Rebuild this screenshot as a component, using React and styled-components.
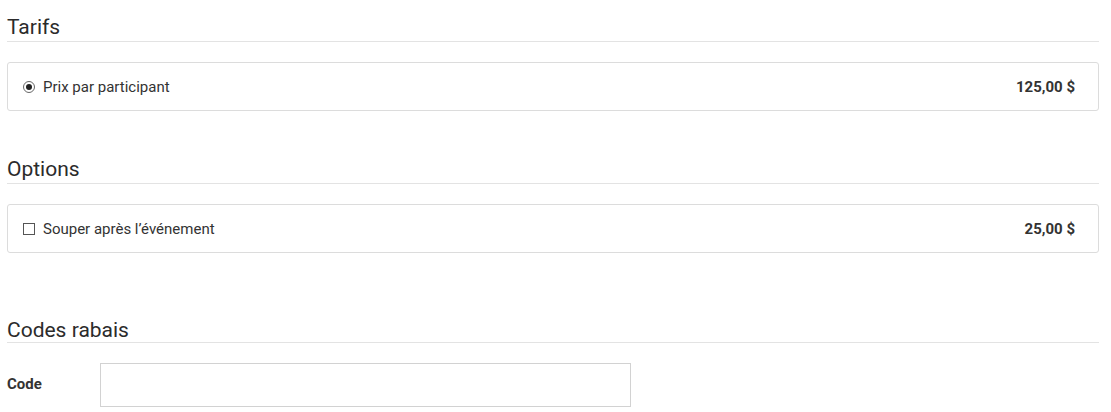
import React, { useState } from "react";
import styled, { createGlobalStyle } from "styled-components";

const GlobalStyle = createGlobalStyle`
  body {
    margin: 0;
    background: #fff;
    font-family: Roboto, "Liberation Sans", Arial, sans-serif;
    color: #333;
  }
`;

const Page = styled.div`
  padding: 0 12px 0 7px;
`;

const Heading = styled.h2`
  margin: ${(p) => p.$top}px 0 0;
  font-size: 21px;
  font-weight: 400;
  line-height: 24px;
  padding-bottom: ${(p) => (p.$tight ? 0 : 2)}px;
  border-bottom: 1px solid #e3e3e3;
  color: #2b2b2b;
`;

const OptionBox = styled.label`
  margin-top: 20px;
  height: 47px;
  border: 1px solid #dcdcdc;
  border-radius: 3px;
  display: flex;
  align-items: center;
  justify-content: space-between;
  padding: 0 23px 0 15px;
  font-size: 15px;
  cursor: pointer;
`;

const Left = styled.span`
  display: flex;
  align-items: center;
  gap: 8px;
`;

const Price = styled.span`
  font-weight: 700;
  color: #333;
`;

const Radio = styled.span`
  width: 10px;
  height: 10px;
  border: 1px solid #666;
  border-radius: 50%;
  display: flex;
  align-items: center;
  justify-content: center;
  &::after {
    content: "";
    width: 6px;
    height: 6px;
    border-radius: 50%;
    background: ${(p) => (p.$checked ? "#222" : "transparent")};
  }
`;

const Check = styled.span`
  width: 10px;
  height: 10px;
  border: 1px solid #555;
  display: flex;
  align-items: center;
  justify-content: center;
  font-size: 10px;
  line-height: 1;
`;

const FieldRow = styled.div`
  margin-top: 20px;
  display: flex;
  align-items: center;
`;

const FieldLabel = styled.span`
  width: 93px;
  font-size: 15px;
  font-weight: 700;
  color: #333;
  margin-top: -3px;
`;

const Input = styled.input`
  height: 42px;
  box-sizing: content-box;
  padding: 0 8px;
  width: 513px;
  border: 1px solid #d2d2d2;
  border-radius: 0;
  font-family: inherit;
  font-size: 15px;
  outline: none;
`;

const App = () => {
  const [dinner, setDinner] = useState(false);

  return (
    <Page>
      <GlobalStyle />
      <Heading $top={15}>Tarifs</Heading>
      <OptionBox>
        <Left>
          <Radio $checked />
          Prix par participant
        </Left>
        <Price>125,00 $</Price>
      </OptionBox>

      <Heading $top={46}>Options</Heading>
      <OptionBox onClick={() => setDinner((v) => !v)}>
        <Left>
          <Check>{dinner ? "✓" : ""}</Check>
          Souper après l’événement
        </Left>
        <Price>25,00 $</Price>
      </OptionBox>

      <Heading $top={65} $tight>
        Codes rabais
      </Heading>
      <FieldRow>
        <FieldLabel>Code</FieldLabel>
        <Input type="text" />
      </FieldRow>
    </Page>
  );
};

export default App;
